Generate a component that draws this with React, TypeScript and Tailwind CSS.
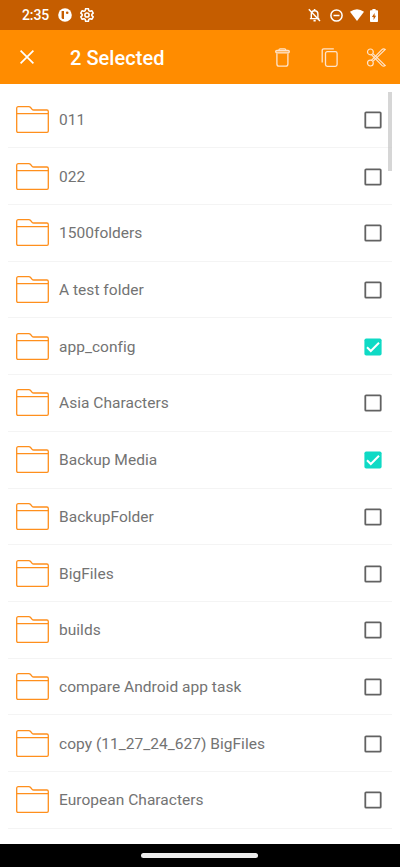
import { useState } from "react";

const FOLDERS = [
  "011",
  "022",
  "1500folders",
  "A test folder",
  "app_config",
  "Asia Characters",
  "Backup Media",
  "BackupFolder",
  "BigFiles",
  "builds",
  "compare Android app task",
  "copy (11_27_24_627) BigFiles",
  "European Characters",
];

function StatusBar() {
  return (
    <div className="flex h-[30px] shrink-0 items-center bg-[#c55d00] pl-[22px] pr-[22px] text-white">
      <span className="w-[36px] text-[14px] font-medium leading-[30px] tracking-[-0.1px]">2:35</span>
      <svg className="h-[14px] w-[14px]" viewBox="0 0 14 14">
        <circle cx="7" cy="7" r="6.8" fill="#fff" />
        <path d="M3.6 3H6V11H5.2A1.6 1.6 0 0 1 3.6 9.4Z" fill="#c55d00" />
        <circle cx="9.2" cy="4.7" r="1.3" fill="#c55d00" />
      </svg>
      <svg className="ml-[8px] h-[14px] w-[14px]" viewBox="2 2 20 20" fill="none" stroke="#fff" strokeWidth="2.2" strokeLinejoin="round">
        <path d="M10 3h4l.6 2.7 1.7 1 2.6-.9 2 3.5-2 1.8v1.8l2 1.8-2 3.5-2.6-.9-1.7 1L14 21h-4l-.6-2.7-1.7-1-2.6.9-2-3.5 2-1.8v-1.8l-2-1.8 2-3.5 2.6.9 1.7-1z" />
        <circle cx="12" cy="12" r="3" />
      </svg>

      <div className="ml-auto flex items-center">
        <svg className="h-[14px] w-[13px]" viewBox="0 0 13 14" fill="none" stroke="#fff" strokeWidth="1.4">
          <path d="M3.3 10.2V6.2Q3.3 2.8 6.6 2.8T9.9 6.2V10.2M1.9 10.6H11.3" />
          <path d="M.8 1.3 12 13" />
          <path d="M6.6 1V3M5.5 12.6H7.7" strokeWidth="1.6" />
        </svg>
        <svg className="ml-[9px] h-[13px] w-[13px]" viewBox="0 0 13 13" fill="none" stroke="#fff" strokeWidth="1.5">
          <circle cx="6.5" cy="6.5" r="5.6" />
          <path d="M3.5 6.5h6" />
        </svg>
        <svg className="ml-[7px] h-[12px] w-[14px]" viewBox="0 0 14 12" fill="#fff">
          <path d="M0 2.8Q7-2.4 14 2.8L7 12Z" />
        </svg>
        <svg className="ml-[6px] h-[13px] w-[8px]" viewBox="0 0 8 13">
          <path d="M2.4 0h3.2v1.3H7.2q.8 0 .8.8V12.2q0 .8-.8.8H.8Q0 13 0 12.2V2.1q0-.8.8-.8H2.4Z" fill="#fff" />
          <path d="M4.6 3.9 1.9 7.9H3.6V10.9L6.1 6.8H4.6Z" fill="#c55d00" />
        </svg>
      </div>
    </div>
  );
}

function ActionBar({ count, onClear }: { count: number; onClear: () => void }) {
  return (
    <header className="flex h-[54px] shrink-0 items-center bg-[#ff8c00] pl-[20px] pr-[14px] text-white">
      <button aria-label="Close" onClick={onClear}>
        <svg className="h-[14px] w-[14px]" viewBox="0 0 14 14" stroke="#fff" strokeWidth="1.7">
          <path d="M.6.6 13.4 13.4M13.4.6.6 13.4" />
        </svg>
      </button>
      <h1 className="ml-[36px] pt-[2px] text-[20px] font-medium leading-6 tracking-[0.05px]">{count} Selected</h1>

      <div className="ml-auto flex items-center">
        <button aria-label="Delete">
          <svg className="h-[19px] w-[15px]" viewBox="0 0 15 19" fill="none" stroke="#ffe4cb" strokeWidth="1.3">
            <path d="M1.9 5.5V15.9Q1.9 18.2 4.2 18.2H10.6Q12.9 18.2 12.9 15.9V5.5" />
            <rect x=".7" y="2.3" width="13.6" height="2.5" rx="1.2" fill="#ffe4cb" fillOpacity=".5" />
            <path d="M4 2.2Q4 .8 5.3.8H9.5Q10.8.8 10.8 2.2" />
          </svg>
        </button>
        <button aria-label="Copy" className="ml-[31px]">
          <svg className="h-[19px] w-[17px]" viewBox="0 0 17 19" fill="none" stroke="#ffe4cb" strokeWidth="1.3">
            <rect x="4.5" y="3.7" width="11.6" height="14.6" rx="1.8" />
            <path d="M1.2 14.4V2.6Q1.2.8 2.9.8H12.8" />
          </svg>
        </button>
        <button aria-label="Cut" className="ml-[28px]">
          <svg className="h-[19px] w-[20px]" viewBox="0 0 20 19" fill="none" stroke="#ffe4cb" strokeWidth="1.2">
            <circle cx="4.4" cy="3.9" r="2.9" />
            <circle cx="4.4" cy="15.1" r="2.9" />
            <path d="M6.9 5.6 19.3 17.6Q17.4 18.8 15.9 17.4L5.4 6.7" />
            <path d="M6.9 13.4 19.3 1.4Q17.4.2 15.9 1.6L5.4 12.3" />
          </svg>
        </button>
      </div>
    </header>
  );
}

function FolderIcon() {
  return (
    <svg className="h-[27px] w-[33px] shrink-0" viewBox="0 0 33 27" fill="none" stroke="#ff8f1c" strokeWidth="1.3">
      <path d="M.7 25V2.3Q.7.7 2.3.7H12.8Q13.8.7 14.4 1.3L16.1 3.3Q16.7 4 17.7 4H30.9Q32.3 4 32.3 5.5V25Q32.3 26.3 31 26.3H2Q.7 26.3.7 25Z" />
      <path d="M.6 7.6H32.4" />
    </svg>
  );
}

function CheckMark({ checked }: { checked: boolean }) {
  return (
    <svg className="mt-px size-[18px]" viewBox="0 0 18 18" fill="none">
      {checked ? (
        <>
          <rect x=".4" y=".4" width="17.2" height="17.2" rx="1.8" fill="#0fdac5" />
          <path d="M3 9.2 6.8 13 15 4.8" stroke="#fff" strokeWidth="2" />
        </>
      ) : (
        <rect x="1.3" y="1.3" width="15.4" height="15.4" rx=".8" stroke="#626262" strokeWidth="1.8" />
      )}
    </svg>
  );
}

export default function App() {
  const [selected, setSelected] = useState<string[]>(["app_config", "Backup Media"]);

  const toggle = (name: string) =>
    setSelected((prev) => (prev.includes(name) ? prev.filter((n) => n !== name) : [...prev, name]));

  return (
    <div className="relative flex h-[867px] w-[400px] flex-col overflow-hidden bg-white font-[Roboto,sans-serif]">
      <StatusBar />
      <ActionBar count={selected.length} onClear={() => setSelected([])} />

      <ul className="min-h-0 flex-1 overflow-hidden px-2 pt-[7.7px]">
        {FOLDERS.map((name) => (
          <li
            key={name}
            onClick={() => toggle(name)}
            className="flex h-[56.7px] items-center border-b border-[#f4f4f4] pl-2 pr-[10px]"
          >
            <FolderIcon />
            <span className="ml-[10px] flex-1 pt-px text-[15.5px] font-normal leading-6 tracking-[0.03px] text-[#737373]">
              {name}
            </span>
            <CheckMark checked={selected.includes(name)} />
          </li>
        ))}
      </ul>

      {/* scroll thumb */}
      <div className="absolute right-2 top-[92px] h-[79px] w-1 bg-[#c8c8c8]/75" />

      <div className="flex h-[23px] shrink-0 justify-center bg-black pt-[9px]">
        <div className="h-[5px] w-[117px] -translate-x-px rounded-full bg-[#ececec]" />
      </div>
    </div>
  );
}
